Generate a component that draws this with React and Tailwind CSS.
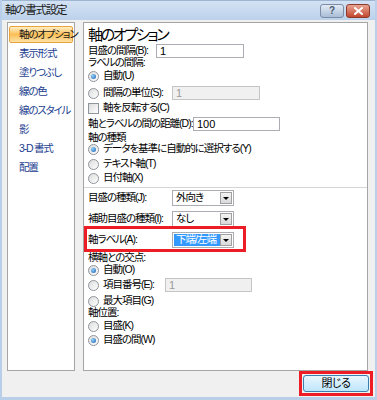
import React from 'react';

const Radio = ({ checked, label, className = '' }) => (
  <div className={`flex items-center ${className}`}>
    <span className="w-[11px] h-[11px] rounded-full border border-[#8f959b] bg-gradient-to-br from-[#dcdcdc] to-[#ffffff] flex items-center justify-center shrink-0">
      {checked && <span className="w-[5px] h-[5px] rounded-full bg-[radial-gradient(circle_at_35%_35%,#8fd0ff,#1d5fa8)]" />}
    </span>
    <span className="ml-[4px] whitespace-nowrap">{label}</span>
  </div>
);

const TextBox = ({ value, disabled, w }) => (
  <div
    className={`h-[14px] border flex items-center pl-[3px] text-[11px] tracking-normal ${
      disabled ? 'bg-[#f0f0f0] border-[#c5c5c5] text-[#9a9a9a]' : 'bg-white border-[#abadb3] text-black'
    } ${w}`}
  >
    {value}
  </div>
);

const Select = ({ value, selected }) => (
  <div className="w-[62px] h-[16px] border border-[#abadb3] bg-white flex items-stretch p-[1px]">
    <div className={`flex-1 flex items-center pl-[2px] whitespace-nowrap ${selected ? 'bg-[#3399ff] text-white' : 'text-black'}`}>
      {value}
    </div>
    <div className="w-[12px] border border-[#a0a0a0] bg-gradient-to-b from-[#f4f4f4] to-[#d9d9d9] flex items-center justify-center">
      <span className="w-0 h-0 border-l-[3px] border-r-[3px] border-t-[3px] border-l-transparent border-r-transparent border-t-black" />
    </div>
  </div>
);

const navItems = ['表示形式', '塗りつぶし', '線の色', '線のスタイル', '影', '3-D 書式', '配置'];

export default function App() {
  return (
    <div className="w-[377px] h-[400px] flex flex-col bg-[#f0f0f0] border-x-[2px] border-b-[3px] border-[#b9cfe9] text-[10.5px] text-black font-['Liberation_Sans','Noto_Sans_CJK_JP',sans-serif] [font-feature-settings:'palt'] overflow-hidden">
      {/* title bar */}
      <div className="h-[20px] shrink-0 flex items-center bg-gradient-to-b from-[#d3e2f3] to-[#bcd2eb] -mx-[2px] px-[5px] border-t border-[#9fb6d3]">
        <span className="text-[11.5px] text-[#1b1b1b] tracking-[-1.2px]">軸の書式設定</span>
        <div className="ml-auto flex gap-[2px] mr-[2px]">
          <div className="w-[24px] h-[14px] rounded-[3px] border border-[#7c8da5] bg-gradient-to-b from-[#e3ebf5] to-[#a9bdd6] flex items-center justify-center text-[10px] font-bold text-[#4a5a72] leading-none">
            ?
          </div>
          <div className="w-[24px] h-[14px] rounded-[3px] border border-[#8d3a2c] bg-gradient-to-b from-[#e8a493] to-[#c2452d] flex items-center justify-center">
            <svg width="9" height="8" viewBox="0 0 9 8">
              <path d="M1 1 L8 7 M8 1 L1 7" stroke="white" strokeWidth="2" strokeLinecap="square" />
            </svg>
          </div>
        </div>
      </div>

      {/* body */}
      <div className="flex pt-[2px] pl-[5px] pr-[7px] gap-[8px] h-[351px] shrink-0">
        {/* nav */}
        <div className="w-[68px] h-full border border-[#a5a5a5] bg-white pt-[3px] px-[1px] tracking-[-1.2px]">
          <div className="h-[17px] flex items-center pl-[9px] border border-[#e8a33f] rounded-[2px] bg-gradient-to-b from-[#ffefc4] via-[#fbbf55] to-[#fde1a4] text-[#1a1a1a] whitespace-nowrap">
            軸のオプション
          </div>
          {navItems.map((n) => (
            <div key={n} className="h-[19px] flex items-center pl-[10px] pt-[2px] text-[#1c3e8f] whitespace-nowrap">
              {n}
            </div>
          ))}
        </div>

        {/* options */}
        <div className="flex-1 h-full border border-[#a5a5a5] bg-white flex flex-col pt-[2px] tracking-[-1px]">
          <div className="h-[18px] flex items-center pl-[4px] text-[15px] tracking-[-2.3px] leading-none">軸のオプション</div>
          <div className="h-[16px] flex items-center pl-[4px]">
            <span className="w-[68px] whitespace-nowrap">目盛の間隔(B):</span>
            <TextBox value="1" w="w-[88px]" />
          </div>
          <div className="h-[8px] flex items-center pl-[4px]">ラベルの間隔:</div>
          <div className="h-[18px] flex items-center pl-[4px]">
            <Radio checked label="自動(U)" />
          </div>
          <div className="h-[16px] flex items-center pl-[4px]">
            <div className="w-[84px]">
              <Radio label="間隔の単位(S):" />
            </div>
            <TextBox value="1" disabled w="w-[88px]" />
          </div>
          <div className="h-[14px] flex items-center pl-[4px]">
            <span className="w-[11px] h-[11px] border border-[#8f959b] bg-gradient-to-br from-[#dcdcdc] to-white shrink-0" />
            <span className="ml-[4px]">軸を反転する(C)</span>
          </div>
          <div className="h-[18px] flex items-center pl-[4px]">
            <span className="w-[105px] whitespace-nowrap">軸とラベルの間の距離(D):</span>
            <TextBox value="100" w="w-[87px]" />
          </div>
          <div className="h-[10px] flex items-center pl-[4px]">軸の種類</div>
          <div className="h-[12px] flex items-center pl-[4px]">
            <Radio checked label="データを基準に自動的に選択する(Y)" />
          </div>
          <div className="h-[18px] flex items-center pl-[4px]">
            <Radio label="テキスト軸(T)" />
          </div>
          <div className="h-[10px] flex items-center pl-[4px]">
            <Radio label="日付軸(X)" />
          </div>
          <div className="h-[5px] border-b border-[#d5d5d5]" />
          <div className="h-[20px] flex items-center pl-[4px]">
            <span className="w-[84px] whitespace-nowrap">目盛の種類(J):</span>
            <Select value="外向き" />
          </div>
          <div className="h-[22px] flex items-center pl-[4px]">
            <span className="w-[84px] whitespace-nowrap">補助目盛の種類(I):</span>
            <Select value="なし" />
          </div>
          <div className="h-[20px] flex items-center pl-[4px] relative">
            <span className="w-[84px] whitespace-nowrap">軸ラベル(A):</span>
            <Select value="下端/左端" selected />
            <div className="absolute left-0 top-[-4px] w-[162px] h-[26px] border-[3px] border-[#ee1c24]" />
          </div>
          <div className="h-[16px] flex items-center pl-[4px]">横軸との交点:</div>
          <div className="h-[8px] flex items-center pl-[4px]">
            <Radio checked label="自動(O)" />
          </div>
          <div className="h-[22px] flex items-center pl-[4px]">
            <div className="w-[77px]">
              <Radio label="項目番号(E):" />
            </div>
            <TextBox value="1" disabled w="w-[87px]" />
          </div>
          <div className="h-[10px] flex items-center pl-[4px]">
            <Radio label="最大項目(G)" />
          </div>
          <div className="h-[14px] flex items-center pl-[4px]">軸位置:</div>
          <div className="h-[12px] flex items-center pl-[4px]">
            <Radio label="目盛(K)" />
          </div>
          <div className="h-[16px] flex items-center pl-[4px]">
            <Radio checked label="目盛の間(W)" />
          </div>
        </div>
      </div>

      {/* footer */}
      <div className="flex-1 flex justify-end items-start pr-[2px]">
        <div className="border-[3px] border-[#ee1c24] p-[1px]">
          <div className="w-[66px] h-[17px] rounded-[3px] border border-[#3c7fb1] bg-gradient-to-b from-[#eaf6fd] to-[#bee6fd] flex items-center justify-center text-[11px] tracking-[-0.5px]">
            閉じる
          </div>
        </div>
      </div>
    </div>
  );
}
